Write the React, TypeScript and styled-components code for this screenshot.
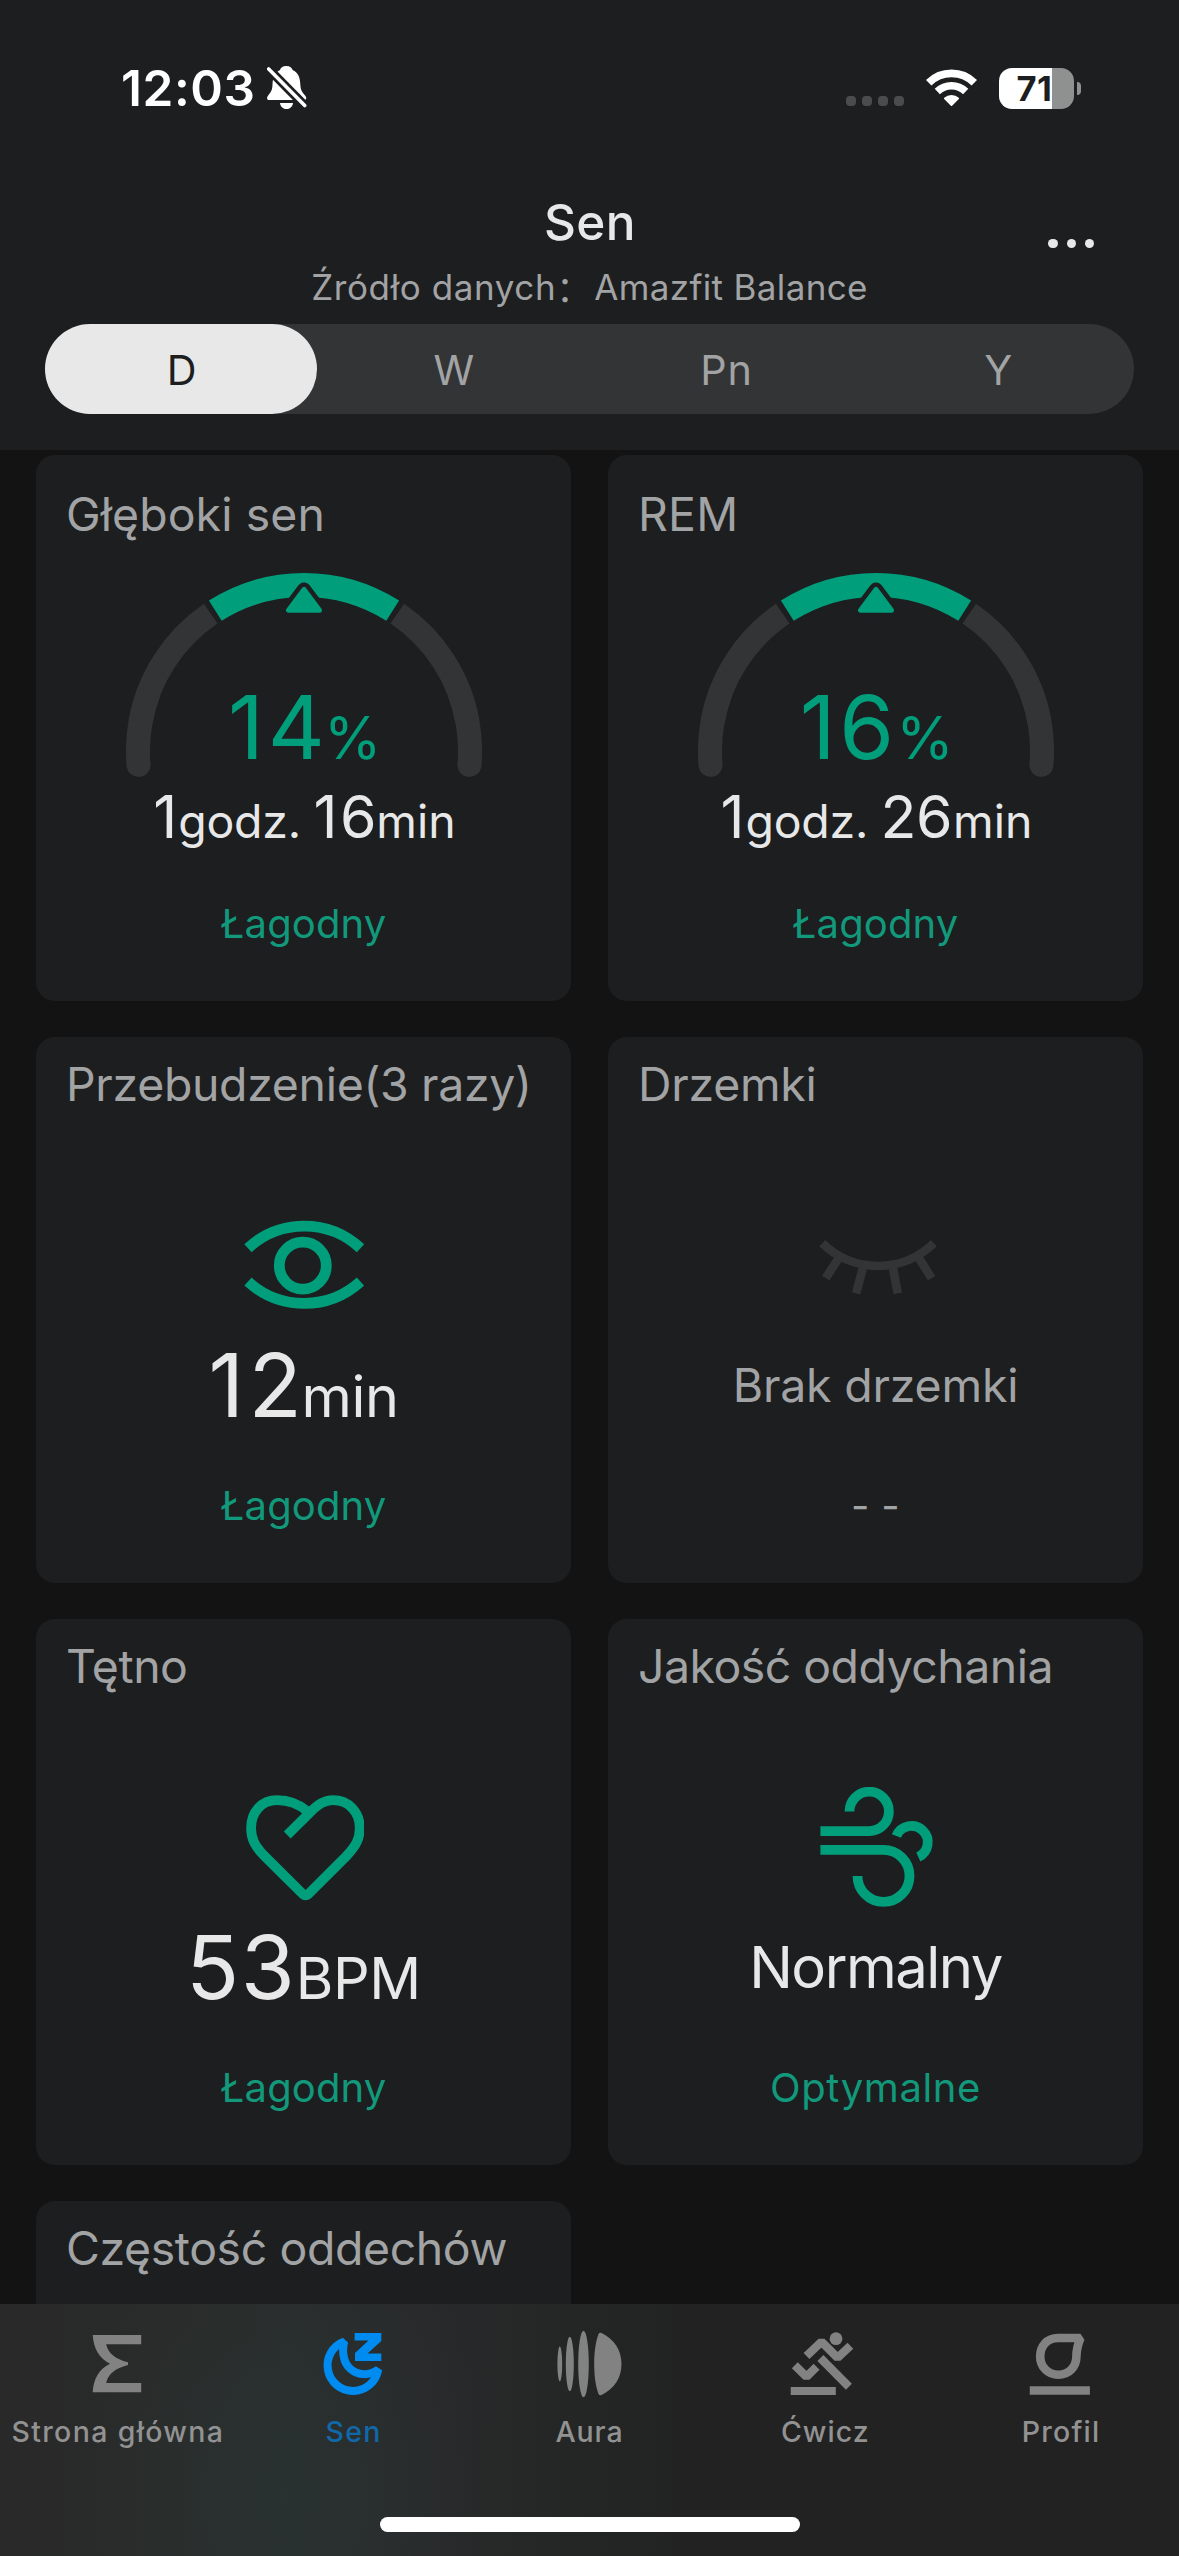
import React from "react";
import styled, { createGlobalStyle } from "styled-components";

const color = {
  page: "#131313",
  surface: "#1c1e20",
  header: "#1d1e20",
  track: "#333435",
  text: "#e8e8e9",
  muted: "#a2a3a4",
  green: "#009e7a",
  greenText: "#12987a",
  tab: "#828282",
  tabLabel: "#929292",
};

const GlobalStyle = createGlobalStyle`
  body {
    margin: 0;
    background: ${color.page};
    font-family: Inter, "Noto Sans CJK SC", sans-serif;
    color: ${color.text};
  }
`;

const Screen = styled.div`
  display: flex;
  flex-direction: column;
  width: 1179px;
  height: 2556px;
  overflow: hidden;
  background: ${color.page};
`;

/* ---------- header ---------- */

const Header = styled.header`
  flex: none;
  display: flex;
  flex-direction: column;
  height: 450px;
  box-sizing: border-box;
  padding-top: 58px;
  background: ${color.header};
`;

const StatusBar = styled.div`
  display: flex;
  align-items: center;
  height: 60px;
  padding: 0 98px 0 121px;
  color: #fff;
`;

const Clock = styled.span`
  margin-right: 11px;
  font-size: 49.5px;
  font-weight: 600;
  line-height: 60px;
  letter-spacing: 0.6px;
`;

const StatusIcons = styled.div`
  display: flex;
  align-items: center;
  gap: 22px;
  margin-left: auto;
`;

const SignalDots = styled.div`
  display: flex;
  gap: 6px;
  padding-top: 26px;
`;

const SignalDot = styled.i`
  width: 10px;
  height: 10px;
  border-radius: 4px;
  background: #4b4c4e;
`;

const Battery = styled.div`
  display: flex;
  align-items: center;
  gap: 3px;
`;

const BatteryBody = styled.div<{ $level: number }>`
  width: 75px;
  height: 41px;
  box-sizing: border-box;
  padding-right: 4px;
  border-radius: 13px;
  background: linear-gradient(
    90deg,
    #fff ${(p) => p.$level}%,
    #8f9090 ${(p) => p.$level}%
  );
  color: ${color.header};
  font-size: 34.5px;
  font-weight: 700;
  line-height: 41px;
  letter-spacing: 0.6px;
  text-align: center;
`;

const BatteryNub = styled.i`
  width: 4px;
  height: 13px;
  border-radius: 0 5px 5px 0;
  background: #8f9090;
`;

const TitleRow = styled.div`
  display: grid;
  grid-template-columns: 1fr auto 1fr;
  align-items: end;
  margin-top: 74px;
  padding: 0 85px;
`;

const Title = styled.h1`
  grid-column: 2;
  margin: 0;
  padding-left: 1px;
  font-size: 49.5px;
  font-weight: 500;
  line-height: 60px;
  letter-spacing: 0.4px;
`;

const MenuButton = styled.button`
  justify-self: end;
  display: flex;
  gap: 9px;
  margin: 0 0 4px;
  padding: 0;
  border: 0;
  background: none;
`;

const MenuDot = styled.i`
  width: 9.2px;
  height: 9.2px;
  border-radius: 50%;
  background: ${color.text};
`;

const Source = styled.p`
  display: flex;
  justify-content: center;
  margin: 13px 0 15px;
  color: ${color.muted};
  font-size: 35px;
  line-height: 44px;
  letter-spacing: 0.35px;
`;

const SourceLabel = styled.span`
  letter-spacing: 0.6px;
`;

const SourceColon = styled.span`
  width: 38px;
  font-family: "Noto Sans CJK SC", sans-serif;
`;

const Segments = styled.div`
  display: flex;
  height: 90px;
  margin: 0 45px;
  border-radius: 45px;
  background: ${color.track};
`;

const Segment = styled.button<{ $active?: boolean }>`
  flex: 1;
  padding: 2px 0 0 2px;
  border: 0;
  border-radius: 45px;
  background: ${(p) => (p.$active ? "#e8e8e8" : "transparent")};
  color: ${(p) => (p.$active ? color.header : color.muted)};
  font: 400 41.3px Inter, sans-serif;
  letter-spacing: 1px;
`;

/* ---------- cards ---------- */

const Content = styled.main`
  flex: 1;
  min-height: 0;
  overflow: hidden;
  display: grid;
  grid-template-columns: 535px 535px;
  grid-auto-rows: 546px;
  gap: 36px 37px;
  padding: 5px 36px 0;
`;

const Card = styled.section`
  display: flex;
  flex-direction: column;
  align-items: center;
  box-sizing: border-box;
  padding-bottom: 52px;
  border-radius: 19px;
  background: ${color.surface};
`;

const CardTitle = styled.h2<{ $top?: number; $track?: number }>`
  align-self: stretch;
  margin: ${(p) => p.$top ?? 19}px 0 0 30px;
  color: ${color.muted};
  font-size: 46.4px;
  font-weight: 400;
  line-height: 56px;
  letter-spacing: ${(p) => p.$track ?? 0}px;
  white-space: nowrap;
`;

const IconSlot = styled.div<{ $color?: string }>`
  display: flex;
  height: 120px;
  margin: 93px 0 10px;
  color: ${(p) => p.$color ?? color.green};
`;

const ValueRow = styled.div<{ $color?: string }>`
  display: flex;
  align-items: baseline;
  height: 100px;
  color: ${(p) => p.$color ?? color.text};
  line-height: 100px;
  white-space: nowrap;
`;

const Figure = styled.span<{ $track: number; $size?: number }>`
  font-size: ${(p) => p.$size ?? 87.5}px;
  letter-spacing: ${(p) => p.$track}px;
`;

const Unit = styled.span<{ $pull?: number; $size?: number; $track?: number }>`
  margin-left: ${(p) => p.$pull ?? 0}px;
  font-size: ${(p) => p.$size ?? 57.5}px;
  letter-spacing: ${(p) => p.$track ?? -0.4}px;
`;

const Phrase = styled.span<{ $size: number; $track: number }>`
  font-size: ${(p) => p.$size}px;
  letter-spacing: ${(p) => p.$track}px;
`;

const Duration = styled.div`
  display: flex;
  align-items: baseline;
  height: 70px;
  margin-top: 3px;
  padding-left: 2px;
  line-height: 70px;
  white-space: nowrap;
`;

const Space = styled.span`
  width: 12.5px;
`;

const Caption = styled.p<{ $color?: string; $track?: number }>`
  margin: auto 0 0;
  color: ${(p) => p.$color ?? color.greenText};
  font-size: 40px;
  line-height: 50px;
  letter-spacing: ${(p) => p.$track ?? 0.15}px;
`;

const GaugeBox = styled.div`
  display: grid;
  justify-items: center;
  height: 206px;
  margin-top: 31px;

  > * {
    grid-area: 1 / 1;
  }
`;

const GaugeValue = styled(ValueRow)`
  margin-top: 104px;
  padding-left: 2px;
`;

/* ---------- tab bar ---------- */

const TabBar = styled.footer`
  flex: none;
  display: flex;
  flex-direction: column;
  align-items: center;
  height: 252px;
  background: radial-gradient(
      ellipse 230px 280px at 285px 190px,
      rgba(42, 52, 52, 0.6),
      rgba(42, 52, 52, 0)
    ),
    linear-gradient(
      90deg,
      #282928 0,
      #292b2a 160px,
      #292d2c 290px,
      #28292a 430px,
      #262727 520px,
      #232525 610px,
      #222222 690px
    );
`;

const Tabs = styled.nav`
  display: flex;
  align-self: stretch;
  padding-top: 24px;
`;

const Tab = styled.a<{ $active?: boolean }>`
  flex: 1 1 0;
  display: flex;
  flex-direction: column;
  align-items: center;
  gap: 11.5px;
  color: ${(p) => (p.$active ? "#008bf0" : color.tab)};
`;

const TabLabel = styled.span<{ $active?: boolean; $track: number }>`
  color: ${(p) => (p.$active ? "#1068a8" : color.tabLabel)};
  font-size: 28.5px;
  font-weight: 500;
  line-height: 40px;
  letter-spacing: ${(p) => p.$track}px;
  white-space: nowrap;
`;

const HomeIndicator = styled.div`
  width: 420px;
  height: 15px;
  margin: auto 0 24px;
  border-radius: 8px;
  background: #fff;
`;

/* ---------- drawings ---------- */

const BellOff = () => (
  <svg width="40" height="44" viewBox="0 0 40 44">
    <path
      fill="#fff"
      d="M19.3 0C23 0 25 2 25.6 4C31 6.5 33 11 33.3 18C33.5 24 35 26 38.5 30C40 32.5 39 34 37 34H2C0 34-.5 32 .8 30C4 26 5.5 24 5.5 18C6 11 8 6.5 13 4C13.5 2 15.5 0 19.3 0ZM13 37H26C25.500 41 22.500 43 19.500 43S13.500 41 13 37Z"
    />
    <path d="M1.700 3L37.700 39.500" stroke={color.header} strokeWidth="9" />
    <path d="M1.700 3L37.700 39.500" stroke="#fff" strokeWidth="3.600" strokeLinecap="round" />
  </svg>
);

const Wifi = () => (
  <svg width="51" height="38" viewBox="0 0 51 38" fill="none" stroke="#fff">
    <path d="M2.700 13.800A32.500 32.500 0 0 1 48.300 13.800" strokeWidth="7.800" />
    <path d="M11.300 22.500A20.300 20.300 0 0 1 39.700 22.500" strokeWidth="7.400" />
    <path
      d="M25.500 36L18.800 29.400A10 10 0 0 1 32.200 29.400Z"
      fill="#fff"
      strokeWidth="1.800"
      strokeLinejoin="round"
    />
  </svg>
);

const polar = (deg: number, r = 166): string => {
  const a = (deg * Math.PI) / 180;
  return `${(178 + r * Math.sin(a)).toFixed(2)} ${(178 - r * Math.cos(a)).toFixed(2)}`;
};

const arc = (from: number, to: number) =>
  `M${polar(from)}A166 166 0 0 1 ${polar(to)}`;

const Gauge = () => (
  <svg width="356" height="206" viewBox="0 0 356 206" fill="none" strokeWidth="24">
    <path d={arc(-94.8, -70)} stroke={color.track} strokeLinecap="round" />
    <path d={arc(-80, -34.2)} stroke={color.track} />
    <path d={arc(70, 94.8)} stroke={color.track} strokeLinecap="round" />
    <path d={arc(34.2, 80)} stroke={color.track} />
    <path d={arc(-32.3, 32.3)} stroke={color.green} />
    <path
      d="M178 16.500L162.500 37.300H193.500Z"
      stroke={color.surface}
      strokeWidth="14"
      strokeLinejoin="round"
    />
    <path
      d="M178 16.500L162.500 37.300H193.500Z"
      fill={color.green}
      stroke={color.green}
      strokeWidth="5"
      strokeLinejoin="round"
    />
  </svg>
);

const IconCanvas = styled.svg.attrs({
  width: 120,
  height: 120,
  viewBox: "0 0 120 120",
  fill: "none",
  stroke: "currentColor",
})``;

const EyeOpen = () => (
  <IconCanvas strokeWidth="10.8">
    <path d="M4 43.200A82.600 82.600 0 0 1 116.500 43.200" />
    <path d="M4 76.600A83.500 83.500 0 0 0 116.500 76.600" />
    <circle cx="58.800" cy="60.600" r="23.500" />
  </IconCanvas>
);

const EyeClosed = () => (
  <IconCanvas strokeWidth="8.6">
    <path d="M6.300 38.100A79.400 79.400 0 0 0 117.900 38.100" />
    <path d="M22.400 53.600L9.700 73.200M46.900 62.900L40.100 88.400M76.900 62.900L81.800 88.400M103.200 53.600L115.600 73.200" />
  </IconCanvas>
);

const Heart = () => (
  <IconCanvas strokeWidth="9.8">
    <path d="M43.200 48L66 25.500C74 17.500 80 13.200 89 13.200C104.500 13.200 115.800 25 115.800 41C115.800 52 112 59 102 69.500L64.500 107Q61.600 109.500 58.700 107L19 67.500C11 59 7.100 52 7.100 41C7.100 25 17.500 13.200 33 13.200C44 13.200 55 17 63.500 24.500" />
  </IconCanvas>
);

const Wind = () => (
  <IconCanvas strokeWidth="9.8">
    <path d="M4.400 44.100H53.200A19.700 19.700 0 1 0 33.500 24.400" />
    <path d="M4.400 62.900H67.500A26 26 0 1 1 41.500 88.900" />
    <path d="M80.400 49A16.300 16.300 0 1 1 102.300 70" />
  </IconCanvas>
);

const TabCanvas = styled.svg.attrs({
  width: 72,
  height: 72,
  viewBox: "0 0 72 72",
})``;

const HomeIcon = () => (
  <TabCanvas fill="currentColor">
    <path d="M10.700 7H59.200V16.300H24.200C26 25 33 31 46 34.300V37C33 40.500 26 46 24.200 55H59.200V64.300H10.700C11.500 51 17 41 28 35.700C17 30.500 11.500 20 10.700 7Z" />
  </TabCanvas>
);

const SleepIcon = () => (
  <TabCanvas fill="currentColor">
    <path
      d="M26.200 13.500A25.500 25.500 0 1 0 60.200 41.500C51 48 40 47.500 32.500 41C26 35.500 23.500 25 26.200 13.500Z"
      fill="none"
      stroke="currentColor"
      strokeWidth="8"
      strokeLinejoin="bevel"
    />
    <path d="M36.600 5H63.300V13L49.500 25.600H63.300V33H37V25L50.500 12.400H36.600Z" />
  </TabCanvas>
);

const AuraIcon = () => (
  <TabCanvas fill="currentColor">
    <ellipse cx="6.800" cy="36" rx="2.400" ry="17.500" />
    <ellipse cx="16.800" cy="36" rx="4" ry="27.300" />
    <ellipse cx="30.500" cy="36" rx="5.300" ry="33.300" />
    <path d="M45.500 6Q46.500 4 48.500 5C61 11 68.500 22 68.500 36C68.500 50 61 61 48.500 67Q46.500 68 45.500 66C42.500 58 41.200 47 41.200 36C41.200 25 42.500 14 45.500 6Z" />
  </TabCanvas>
);

const RunIcon = () => (
  <TabCanvas fill="none" stroke="currentColor" strokeWidth="8.4" strokeLinejoin="bevel">
    <circle cx="47" cy="10.700" r="6.400" fill="currentColor" stroke="none" />
    <path d="M17.500 28L32.500 13.700L48.600 29.700L61.400 17.700" />
    <path d="M31.400 30L59.900 58.700" />
    <path d="M5.800 37.300L17.500 48.700L27.600 38.700" />
    <path d="M1.700 63H46.800" strokeWidth="8" />
  </TabCanvas>
);

const ProfileIcon = () => (
  <TabCanvas fill="none" stroke="currentColor" strokeWidth="8.6" strokeLinejoin="bevel">
    <path d="M55.500 10H33C22 10 15.200 18 15.200 28.500C15.200 39 23 46.800 33.300 46.800C44 46.800 51.400 39 51.400 28.500C51.400 22 52.500 17 55.500 10Z" />
    <path d="M4.800 62.500H64.900" />
  </TabCanvas>
);

/* ---------- data ---------- */

const segments = ["D", "W", "Pn", "Y"];

const tabs = [
  { label: "Strona główna", track: 1.35, icon: <HomeIcon /> },
  { label: "Sen", track: 1.3, icon: <SleepIcon />, active: true },
  { label: "Aura", track: 0.9, icon: <AuraIcon /> },
  { label: "Ćwicz", track: 1, icon: <RunIcon /> },
  { label: "Profil", track: 1.2, icon: <ProfileIcon /> },
];

type Stage = {
  title: string;
  titleTrack: number;
  percent: string;
  percentPull: number;
  minutes: string;
  minutesTrack: number;
  minutesPull: number;
};

const stages: Stage[] = [
  {
    title: "Głęboki sen",
    titleTrack: 0.1,
    percent: "14",
    percentPull: -4.5,
    minutes: "16",
    minutesTrack: 2.6,
    minutesPull: -3,
  },
  {
    title: "REM",
    titleTrack: 0.2,
    percent: "16",
    percentPull: -1.5,
    minutes: "26",
    minutesTrack: -0.6,
    minutesPull: 1,
  },
];

const StageCard = (s: Stage) => (
  <Card>
    <CardTitle $top={31} $track={s.titleTrack}>
      {s.title}
    </CardTitle>
    <GaugeBox>
      <Gauge />
      <GaugeValue $color={color.green}>
        <Figure $size={88.5} $track={3.6}>
          {s.percent}
        </Figure>
        <Unit $pull={s.percentPull} $size={58.5}>
          %
        </Unit>
      </GaugeValue>
    </GaugeBox>
    <Duration>
      <Figure $size={59} $track={0}>
        1
      </Figure>
      <Unit $pull={1} $size={46.4} $track={-0.2}>
        godz.
      </Unit>
      <Space />
      <Figure $size={59} $track={s.minutesTrack}>
        {s.minutes}
      </Figure>
      <Unit $pull={s.minutesPull} $size={46.4} $track={0.1}>
        min
      </Unit>
    </Duration>
    <Caption>Łagodny</Caption>
  </Card>
);

export default function App() {
  return (
    <Screen>
      <GlobalStyle />
      <Header>
        <StatusBar>
          <Clock>12:03</Clock>
          <BellOff />
          <StatusIcons>
            <SignalDots>
              <SignalDot />
              <SignalDot />
              <SignalDot />
              <SignalDot />
            </SignalDots>
            <Wifi />
            <Battery>
              <BatteryBody $level={71}>71</BatteryBody>
              <BatteryNub />
            </Battery>
          </StatusIcons>
        </StatusBar>
        <TitleRow>
          <Title>Sen</Title>
          <MenuButton aria-label="Menu">
            <MenuDot />
            <MenuDot />
            <MenuDot />
          </MenuButton>
        </TitleRow>
        <Source>
          <SourceLabel>Źródło danych</SourceLabel>
          <SourceColon>：</SourceColon>
          <span>Amazfit Balance</span>
        </Source>
        <Segments>
          {segments.map((s, i) => (
            <Segment key={s} $active={i === 0}>
              {s}
            </Segment>
          ))}
        </Segments>
      </Header>

      <Content>
        {stages.map((s) => (
          <StageCard key={s.title} {...s} />
        ))}

        <Card>
          <CardTitle $track={-0.3}>Przebudzenie(3 razy)</CardTitle>
          <IconSlot>
            <EyeOpen />
          </IconSlot>
          <ValueRow>
            <Figure $track={4.6}>12</Figure>
            <Unit $pull={-5}>min</Unit>
          </ValueRow>
          <Caption>Łagodny</Caption>
        </Card>

        <Card>
          <CardTitle $track={-0.25}>Drzemki</CardTitle>
          <IconSlot $color={color.track}>
            <EyeClosed />
          </IconSlot>
          <ValueRow $color={color.muted}>
            <Phrase $size={46.4} $track={-0.17}>
              Brak drzemki
            </Phrase>
          </ValueRow>
          <Caption $color={color.muted} $track={0.4}>
            - -
          </Caption>
        </Card>

        <Card>
          <CardTitle $track={-0.46}>Tętno</CardTitle>
          <IconSlot>
            <Heart />
          </IconSlot>
          <ValueRow>
            <Figure $track={1.5}>53</Figure>
            <Unit $pull={-0.5}>BPM</Unit>
          </ValueRow>
          <Caption>Łagodny</Caption>
        </Card>

        <Card>
          <CardTitle $track={-0.5}>Jakość oddychania</CardTitle>
          <IconSlot>
            <Wind />
          </IconSlot>
          <ValueRow>
            <Phrase $size={58} $track={-1.5}>
              Normalny
            </Phrase>
          </ValueRow>
          <Caption $track={0.6}>Optymalne</Caption>
        </Card>

        <Card>
          <CardTitle $track={-0.38}>Częstość oddechów</CardTitle>
        </Card>
      </Content>

      <TabBar>
        <Tabs>
          {tabs.map((t) => (
            <Tab key={t.label} $active={t.active}>
              {t.icon}
              <TabLabel $active={t.active} $track={t.track}>
                {t.label}
              </TabLabel>
            </Tab>
          ))}
        </Tabs>
        <HomeIndicator />
      </TabBar>
    </Screen>
  );
}
